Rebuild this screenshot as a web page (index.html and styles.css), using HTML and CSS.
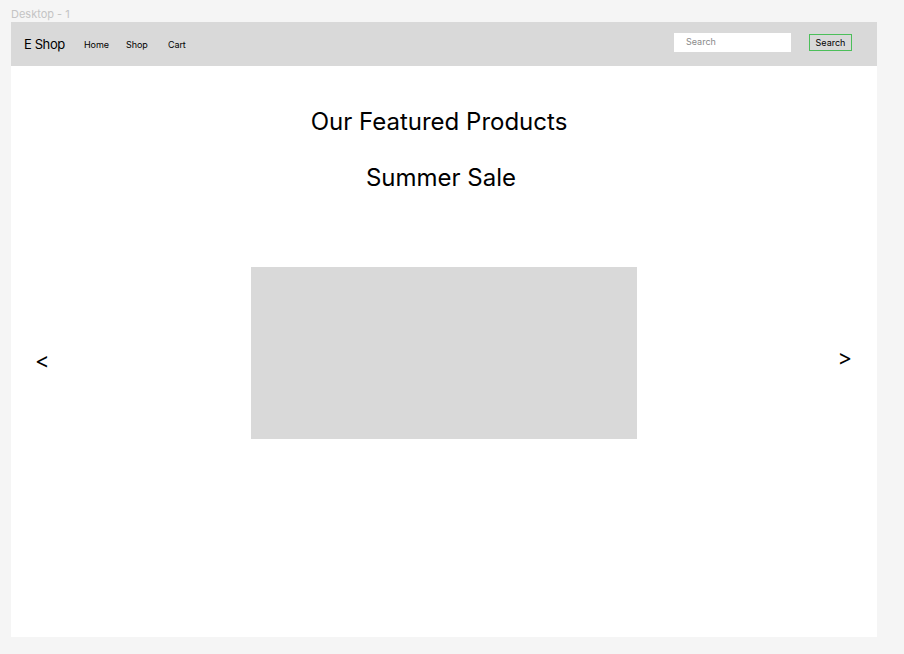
FILE: index.html
```html
<!DOCTYPE html>
<html>
<head>
<meta charset="utf-8">
<link rel="stylesheet" href="styles.css">
</head>
<body>
<div class="canvas">
  <div class="label">Desktop - 1</div>
  <div class="frame">
    <header class="topbar">
      <div class="brand">E Shop</div>
      <nav class="nav">
        <a class="nav-link">Home</a>
        <a class="nav-link">Shop</a>
        <a class="nav-link">Cart</a>
      </nav>
      <div class="search">
        <div class="search-input">Search</div>
        <button class="search-btn">Search</button>
      </div>
    </header>
    <main class="content">
      <h1 class="title">Our Featured Products</h1>
      <h2 class="subtitle">Summer Sale</h2>
      <div class="carousel">
        <div class="arrow arrow-left">&lt;</div>
        <div class="slide"></div>
        <div class="arrow arrow-right">&gt;</div>
      </div>
    </main>
  </div>
</div>
</body>
</html>
```
FILE: styles.css
```css
* { box-sizing: border-box; }
html, body { margin: 0; padding: 0; }
body {
  background: #f5f5f5;
  font-family: Inter, "Noto Sans", sans-serif;
  color: #000;
}
.canvas {
  width: 904px;
  height: 654px;
  padding: 6px 27px 17px 11px;
  display: flex;
  flex-direction: column;
}
.label {
  font-size: 11px;
  line-height: 16px;
  height: 16px;
  color: #c4c4c4;
}
.frame {
  flex: 1;
  background: #fff;
  display: flex;
  flex-direction: column;
}
.topbar {
  height: 44px;
  background: #d9d9d9;
  display: flex;
  align-items: center;
  padding: 0 25px 0 13px;
}
.brand {
  font-size: 13px;
  line-height: 16px;
  letter-spacing: -0.4px;
  width: 40px;
  white-space: nowrap;
}
.nav {
  display: flex;
  margin-left: 20px;
  padding-top: 1px;
}
.nav-link {
  font-size: 9px;
  line-height: 12px;
  color: #000;
  letter-spacing: -0.1px;
  white-space: nowrap;
}
.nav-link:nth-child(1) { width: 42px; }
.nav-link:nth-child(2) { width: 42px; }
.search {
  margin-left: auto;
  display: flex;
  align-items: center;
  gap: 18px;
  margin-top: -3px;
}
.search-input {
  width: 117px;
  height: 19px;
  background: #fff;
  font-size: 9px;
  line-height: 18px;
  padding-left: 12px;
  color: #8a8a8a;
}
.search-btn {
  width: 43px;
  height: 17px;
  padding: 0;
  border: 1px solid #4cbf5a;
  background: #d9d9d9;
  font-family: Inter, "Noto Sans", sans-serif;
  font-size: 9px;
  line-height: 15px;
  color: #000;
}
.content {
  display: flex;
  flex-direction: column;
  align-items: center;
}
.title {
  margin: 41px 0 0;
  font-size: 24px;
  font-weight: 400;
  line-height: 29px;
  padding-right: 10px;
}
.subtitle {
  margin: 27px 0 0;
  font-size: 24px;
  font-weight: 400;
  line-height: 29px;
  padding-right: 6px;
}
.carousel {
  align-self: stretch;
  display: grid;
  grid-template-columns: 1fr 386px 1fr;
  align-items: center;
  margin-top: 75px;
}
.slide {
  height: 172px;
  background: #d9d9d9;
}
.arrow {
  font-size: 22px;
  line-height: 26px;
}
.arrow-left {
  justify-self: start;
  padding-left: 24px;
  margin-top: 14px;
}
.arrow-right {
  justify-self: end;
  padding-right: 25px;
  margin-top: 8px;
}
```
